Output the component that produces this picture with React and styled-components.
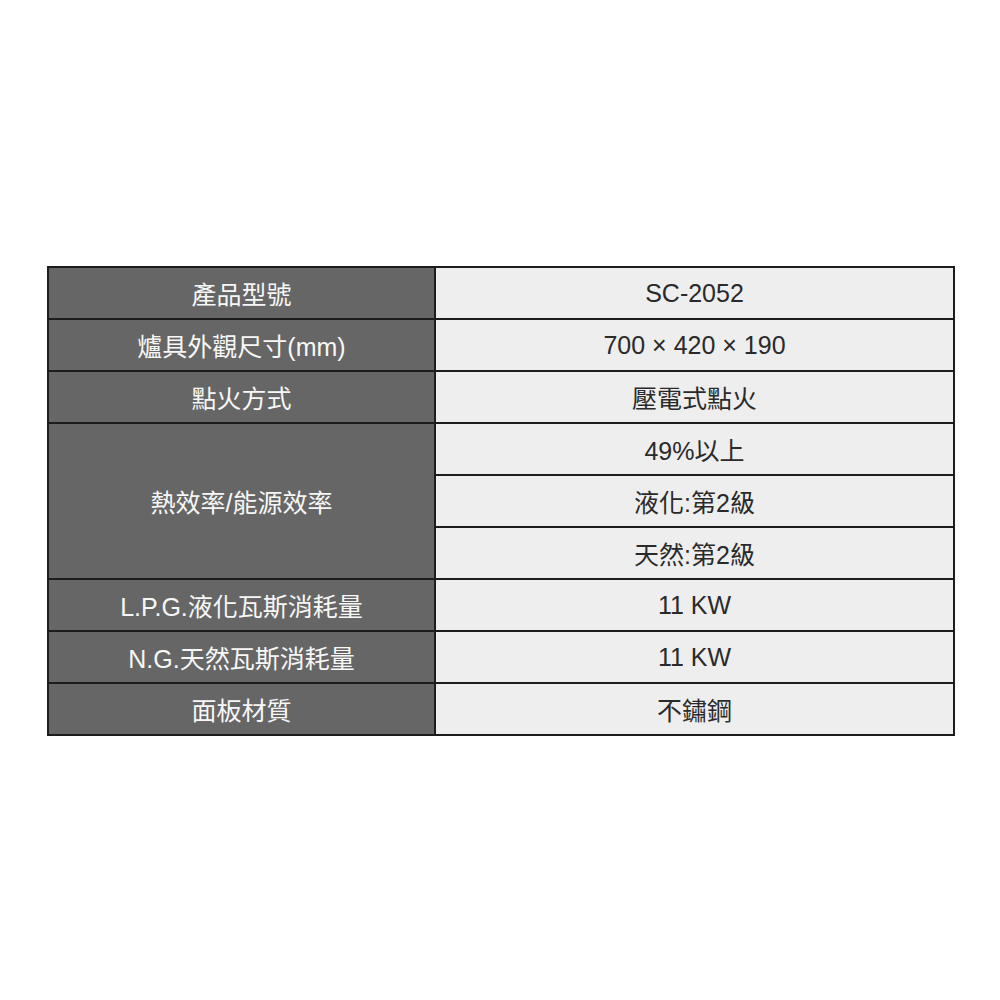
import React from "react";
import styled, { createGlobalStyle } from "styled-components";

const GlobalStyle = createGlobalStyle`
  html, body {
    margin: 0;
    padding: 0;
    background: #fff;
  }
`;

const Page = styled.div`
  width: 1000px;
  height: 1000px;
  padding: 266px 0 0 47px;
  box-sizing: border-box;
`;

const SpecTable = styled.table`
  width: 908px;
  border-collapse: collapse;
  table-layout: fixed;
  font-family: "Liberation Sans", Arial, "Noto Sans CJK TC", sans-serif;
  font-size: 25px;
  border: 2px solid #1c1c1c;
`;

const Label = styled.th`
  width: 385px;
  height: 50px;
  padding: 0;
  background: #666666;
  color: #f7f7f7;
  font-weight: normal;
  text-align: center;
  border: 2px solid #1c1c1c;
`;

const Value = styled.td`
  height: 50px;
  padding: 0;
  background: #eeeeee;
  color: #2a2a2a;
  text-align: center;
  border: 2px solid #1c1c1c;
`;

const specs = [
  { label: "產品型號", values: ["SC-2052"] },
  { label: "爐具外觀尺寸(mm)", values: ["700 × 420 × 190"] },
  { label: "點火方式", values: ["壓電式點火"] },
  { label: "熱效率/能源效率", values: ["49%以上", "液化:第2級", "天然:第2級"] },
  { label: "L.P.G.液化瓦斯消耗量", values: ["11 KW"] },
  { label: "N.G.天然瓦斯消耗量", values: ["11 KW"] },
  { label: "面板材質", values: ["不鏽鋼"] },
];

const App = () => {
  return (
    <Page>
      <GlobalStyle />
      <SpecTable>
        <tbody>
          {specs.map((spec) =>
            spec.values.map((value, i) => (
              <tr key={spec.label + i}>
                {i === 0 && <Label rowSpan={spec.values.length}>{spec.label}</Label>}
                <Value>{value}</Value>
              </tr>
            ))
          )}
        </tbody>
      </SpecTable>
    </Page>
  );
};

export default App;
